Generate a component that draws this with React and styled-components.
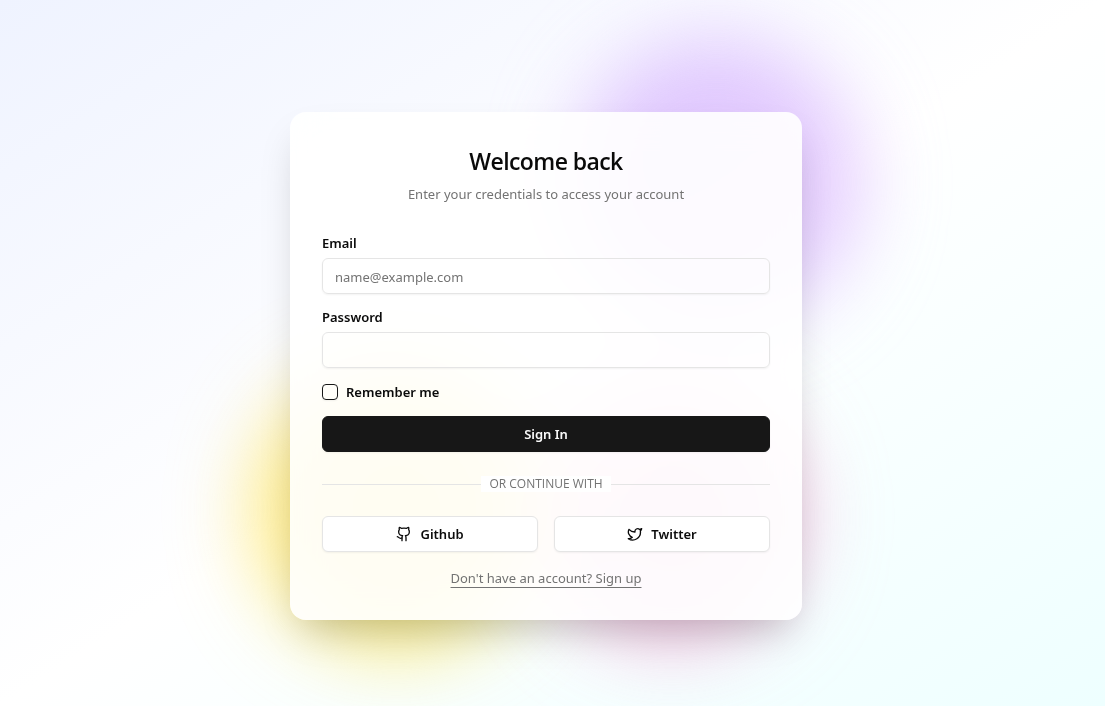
import React from 'react';
import styled, { createGlobalStyle } from 'styled-components';
import { Github, Twitter } from 'lucide-react';

const GlobalStyle = createGlobalStyle`
  *, *::before, *::after { box-sizing: border-box; }
  body {
    margin: 0;
    color: #0a0a0a;
    font-family: "Segoe UI", "Noto Sans", "Open Sans", sans-serif;
    font-size: 13px;
    line-height: 20px;
  }
  button, input { font: inherit; color: inherit; }
`;

const Page = styled.main`
  position: relative;
  display: flex;
  align-items: center;
  justify-content: center;
  min-height: 100vh;
  padding: 26px 13px 0 0;
  overflow: hidden;
  background: linear-gradient(to bottom right, #eff3ff, #ffffff, #eeffff);
`;

const Stage = styled.div`
  position: relative;
  width: 100%;
  max-width: 512px;
`;

const Blob = styled.div`
  position: absolute;
  left: ${(p) => p.$x}px;
  top: ${(p) => p.$y}px;
  width: ${(p) => p.$size}px;
  height: ${(p) => p.$size}px;
  border-radius: 50%;
  background: ${(p) => p.$color};
  mix-blend-mode: multiply;
  filter: blur(40px);
  opacity: 0.7;
`;

const Card = styled.section`
  position: relative;
  display: flex;
  flex-direction: column;
  padding: 32px;
  border-radius: 16px;
  background: rgba(255, 255, 255, 0.9);
  backdrop-filter: blur(16px);
  box-shadow: 0 20px 40px -12px rgba(0, 0, 0, 0.22);
`;

const Header = styled.header`
  display: flex;
  flex-direction: column;
  gap: 6px;
  margin-bottom: 32px;
  text-align: center;
`;

const Title = styled.h1`
  margin: 0;
  font-family: "Segoe UI", "Open Sans", "Noto Sans", sans-serif;
  font-size: 23px;
  line-height: 34px;
  font-weight: 600;
  letter-spacing: -0.025em;
`;

const Subtitle = styled.p`
  margin: 0;
  color: #737373;
`;

const Form = styled.form`
  display: flex;
  flex-direction: column;
  gap: 16px;
`;

const Field = styled.div`
  display: flex;
  flex-direction: column;
  gap: 8px;
`;

const Label = styled.label`
  font-weight: 600;
  line-height: 14px;
`;

const Input = styled.input`
  width: 100%;
  height: 36px;
  padding: 6px 12px 4px;
  border: 1px solid #e5e5e5;
  border-radius: 6px;
  background: transparent;
  box-shadow: 0 1px 2px rgba(0, 0, 0, 0.05);
  &::placeholder { color: #737373; opacity: 1; }
`;

const CheckRow = styled.div`
  display: flex;
  align-items: center;
  gap: 8px;
`;

const Checkbox = styled.input`
  appearance: none;
  width: 16px;
  height: 16px;
  margin: 0;
  border: 1px solid #171717;
  border-radius: 4px;
  box-shadow: 0 1px 2px rgba(0, 0, 0, 0.05);
  &:checked { background: #171717; }
`;

const Button = styled.button`
  display: flex;
  align-items: center;
  justify-content: center;
  gap: 8px;
  height: 36px;
  padding: 0 16px;
  border: 1px solid ${(p) => (p.$primary ? '#171717' : '#e5e5e5')};
  border-radius: 6px;
  background: ${(p) => (p.$primary ? '#171717' : '#ffffff')};
  color: ${(p) => (p.$primary ? '#fafafa' : '#0a0a0a')};
  font-weight: 600;
  box-shadow: 0 1px 2px rgba(0, 0, 0, 0.05);
  cursor: pointer;
`;

const Divider = styled.div`
  display: flex;
  align-items: center;
  margin: 24px 0;
  color: #737373;
  font-family: "Segoe UI", "Open Sans", "Noto Sans", sans-serif;
  font-size: 12px;
  line-height: 16px;
  text-transform: uppercase;
  &::before, &::after {
    content: "";
    flex: 1;
    border-top: 1px solid #e5e5e5;
  }
`;

const DividerText = styled.span`
  padding: 0 8px;
  background: #ffffff;
`;

const Providers = styled.div`
  display: grid;
  grid-template-columns: 1fr 1fr;
  gap: 16px;
`;

const SignUp = styled.a`
  align-self: center;
  margin-top: 16px;
  color: #737373;
  text-decoration: underline;
  text-underline-offset: 4px;
`;

export default function App() {
  return (
    <>
      <GlobalStyle />
      <Page>
        <Stage>
          <Blob $color="#fde047" $x={-36} $y={255} $size={284} />
          <Blob $color="#d8b4fe" $x={282} $y={-74} $size={288} />
          <Blob $color="#f9a8d4" $x={252} $y={274} $size={260} />
          <Card>
            <Header>
              <Title>Welcome back</Title>
              <Subtitle>Enter your credentials to access your account</Subtitle>
            </Header>
            <Form onSubmit={(e) => e.preventDefault()}>
              <Field>
                <Label htmlFor="email">Email</Label>
                <Input id="email" type="email" placeholder="name@example.com" />
              </Field>
              <Field>
                <Label htmlFor="password">Password</Label>
                <Input id="password" type="password" />
              </Field>
              <CheckRow>
                <Checkbox id="remember" type="checkbox" />
                <Label htmlFor="remember">Remember me</Label>
              </CheckRow>
              <Button type="submit" $primary>Sign In</Button>
            </Form>
            <Divider><DividerText>Or continue with</DividerText></Divider>
            <Providers>
              <Button type="button"><Github size={16} />Github</Button>
              <Button type="button"><Twitter size={16} />Twitter</Button>
            </Providers>
            <SignUp href="#signup">Don't have an account? Sign up</SignUp>
          </Card>
        </Stage>
      </Page>
    </>
  );
}
